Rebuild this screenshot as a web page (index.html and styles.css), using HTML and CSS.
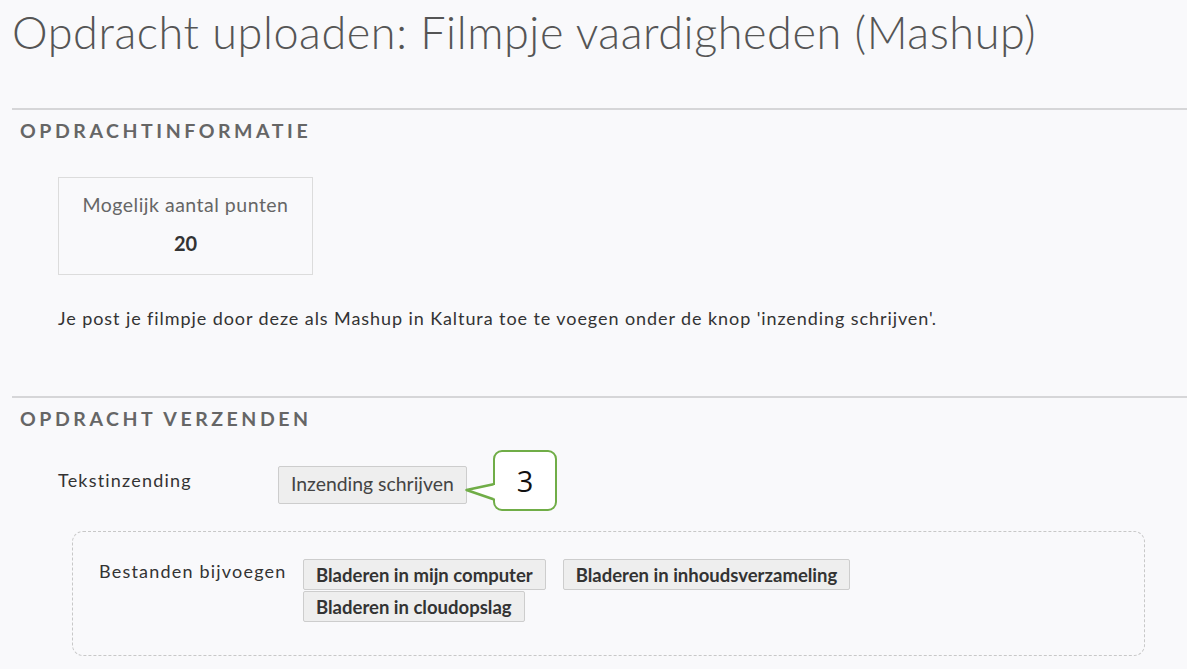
FILE: index.html
```html
<!DOCTYPE html>
<html>
<head>
<meta charset="utf-8">
<link rel="stylesheet" href="styles.css">
</head>
<body>
<div class="page">
  <h1 class="title">Opdracht uploaden: Filmpje vaardigheden (Mashup)</h1>
  <section class="section info">
    <h2 class="section-head">OPDRACHTINFORMATIE</h2>
    <div class="section-body">
      <div class="points">
        <div class="points-label">Mogelijk aantal punten</div>
        <div class="points-value">20</div>
      </div>
      <p class="desc">Je post je filmpje door deze als Mashup in Kaltura toe te voegen onder de knop 'inzending schrijven'.</p>
    </div>
  </section>
  <section class="section submit">
    <h2 class="section-head">OPDRACHT VERZENDEN</h2>
    <div class="section-body">
      <div class="row text-row">
        <div class="row-label">Tekstinzending</div>
        <button class="btn btn-light">Inzending schrijven</button>
        <div class="callout">
          <svg class="callout-tail" width="34" height="22" viewBox="0 0 34 22">
            <polygon points="29,4 3,9 29,17.5 33,17.5 33,4" fill="#ffffff"/>
            <path d="M29.5 3.2 L2.5 9 L29.5 18.3" fill="none" stroke="#70ad47" stroke-width="2.5" stroke-linejoin="round"/>
          </svg>
          <span class="callout-num">3</span>
        </div>
      </div>
      <div class="attach">
        <div class="row-label attach-label">Bestanden bijvoegen</div>
        <div class="attach-buttons">
          <button class="btn">Bladeren in mijn computer</button>
          <button class="btn">Bladeren in inhoudsverzameling</button>
          <button class="btn">Bladeren in cloudopslag</button>
        </div>
      </div>
    </div>
  </section>
</div>
</body>
</html>
```
FILE: styles.css
```css
html, body {
  margin: 0;
  padding: 0;
  background: #f9f9fb;
}
body {
  font-family: Lato, "Open Sans", sans-serif;
  color: #333;
}
.page {
  padding: 0 0 0 12px;
}
.title {
  margin: 0;
  padding-top: 6px;
  font-weight: 300;
  font-size: 45px;
  line-height: 52px;
  color: #555;
  letter-spacing: 0.56px;
}
.section {
  border-top: 2px solid #d6d6d8;
}
.info {
  margin-top: 50px;
}
.submit {
  margin-top: 67px;
}
.section-head {
  margin: 0;
  padding: 9px 0 0 8px;
  font-size: 19.5px;
  line-height: 24px;
  font-weight: 700;
  letter-spacing: 3.55px;
  color: #666;
}
.section-body {
  padding-left: 46px;
}
.points {
  margin-top: 34px;
  width: 253px;
  height: 96px;
  border: 1px solid #dcdcdc;
  text-align: center;
}
.points-label {
  margin-top: 15px;
  font-size: 19.5px;
  line-height: 24px;
  letter-spacing: 0.5px;
  color: #666;
}
.points-value {
  margin-top: 13px;
  font-size: 20px;
  line-height: 26px;
  font-weight: 700;
  color: #333;
}
.desc {
  margin: 32px 0 0 0;
  font-size: 18px;
  line-height: 22px;
  letter-spacing: 0.92px;
  color: #333;
}
.row {
  display: flex;
  align-items: flex-start;
  position: relative;
}
.text-row {
  margin-top: 35px;
}
.row-label {
  font-size: 18px;
  line-height: 24px;
  letter-spacing: 1.2px;
  color: #333;
  width: 220px;
  padding-top: 2px;
}
.btn {
  font-family: Lato, "Open Sans", sans-serif;
  font-weight: 700;
  font-size: 18.5px;
  line-height: 24px;
  color: #333;
  background: #eeeeee;
  border: 1px solid #cdcdcd;
  border-radius: 2px;
  padding: 3px 12px 2px 12px;
  margin: 0;
  cursor: pointer;
}
.btn-light {
  font-weight: 400;
  font-size: 19.4px;
  padding: 5px 12px 7px 12px;
  color: #444;
}
.callout {
  position: absolute;
  left: 435px;
  top: -16px;
  width: 64px;
  height: 61px;
  box-sizing: border-box;
  border: 2.5px solid #70ad47;
  border-radius: 9px;
  background: #fff;
  display: flex;
  align-items: center;
  justify-content: center;
}
.callout-tail {
  position: absolute;
  left: -31px;
  top: 29px;
}
.callout-num {
  font-family: "Open Sans", "DejaVu Sans", sans-serif;
  font-size: 29px;
  line-height: 1;
  color: #111;
}
.attach {
  margin-top: 27px;
  margin-left: 14px;
  width: 1073px;
  height: 125px;
  border: 1px dashed #c8c8c8;
  border-radius: 11px;
  display: flex;
  align-items: flex-start;
  box-sizing: border-box;
  padding: 27px 0 0 26px;
}
.attach-label {
  width: 204px;
  padding-top: 0;
}
.attach-buttons {
  display: flex;
  flex-wrap: wrap;
  align-items: flex-start;
  width: 580px;
  column-gap: 17px;
  row-gap: 1px;
}
```
